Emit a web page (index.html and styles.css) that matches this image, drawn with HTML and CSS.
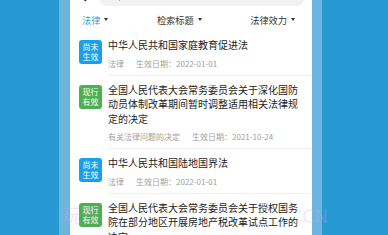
FILE: index.html
```html
<!DOCTYPE html>
<html lang="zh-CN">
<head>
<meta charset="utf-8">
<link rel="stylesheet" href="styles.css">
</head>
<body>
<div class="stage">
  <div class="stripe stripe-left"></div>
  <div class="screen">
    <div class="top">
      <svg class="back" width="8" height="12" viewBox="0 0 8 12"><path d="M6 0 L1 5 L6 10" fill="none" stroke="#333" stroke-width="1.6"/></svg>
      <div class="search">
        <svg class="mag" width="8" height="8" viewBox="0 0 8 8"><circle cx="3.5" cy="3.5" r="2.6" fill="none" stroke="#666" stroke-width="1"/><path d="M5.5 5.5 L7.5 7.5" stroke="#666" stroke-width="1"/></svg>
      </div>
    </div>
    <div class="filters">
      <div class="filter active">法律<span class="caret"></span></div>
      <div class="filter">检索标题<span class="caret"></span></div>
      <div class="filter">法律效力<span class="caret"></span></div>
    </div>
    <div class="list">
      <div class="item">
        <div class="badge pending">尚未<br>生效</div>
        <div class="content">
          <div class="title">中华人民共和国家庭教育促进法</div>
          <div class="meta"><span>法律</span><span>生效日期：2022-01-01</span></div>
        </div>
      </div>
      <div class="item">
        <div class="badge valid">现行<br>有效</div>
        <div class="content">
          <div class="title">全国人民代表大会常务委员会关于深化国防动员体制改革期间暂时调整适用相关法律规定的决定</div>
          <div class="meta"><span>有关法律问题的决定</span><span>生效日期：2021-10-24</span></div>
        </div>
      </div>
      <div class="item">
        <div class="badge pending">尚未<br>生效</div>
        <div class="content">
          <div class="title">中华人民共和国陆地国界法</div>
          <div class="meta"><span>法律</span><span>生效日期：2022-01-01</span></div>
        </div>
      </div>
      <div class="item">
        <div class="badge valid">现行<br>有效</div>
        <div class="content">
          <div class="title">全国人民代表大会常务委员会关于授权国务院在部分地区开展房地产税改革试点工作的决定</div>
          <div class="meta"><span>有关法律问题的决定</span><span>生效日期：2021-10-23</span></div>
        </div>
      </div>
    </div>
  </div>
  <div class="stripe stripe-right"></div>
</div>
<div class="watermark"><span>玩营</span><span>CN</span></div>
</body>
</html>
```

FILE: styles.css
```css
html, body {
  margin: 0;
  padding: 0;
}
body {
  width: 388px;
  height: 235px;
  overflow: hidden;
  background: #2698d2;
  font-family: "Noto Sans CJK SC", "Noto Sans", sans-serif;
  position: relative;
}
.stage {
  display: flex;
  height: 235px;
  margin-left: 59px;
}
.stripe {
  background: #6db5df;
}
.stripe-left {
  width: 11px;
}
.stripe-right {
  width: 10px;
}
.screen {
  width: 242px;
  background: #fff;
  overflow: hidden;
}
.top {
  height: 8px;
  overflow: hidden;
  display: flex;
  align-items: flex-end;
  padding: 0 8px 0 10px;
}
.back {
  flex: none;
  margin-bottom: 5px;
  margin-right: 12px;
}
.search {
  flex: 1;
  height: 22px;
  margin-bottom: 2px;
  background: #f1f1f2;
  border-radius: 7px;
  display: flex;
  align-items: flex-end;
  padding-left: 12px;
}
.mag {
  margin-bottom: 5px;
}
.filters {
  height: 23px;
  display: flex;
  align-items: center;
  justify-content: space-between;
  padding: 0 17px 0 12px;
  font-size: 9.2px;
  line-height: 12px;
  color: #333;
}
.filter {
  display: flex;
  align-items: center;
}
.filter.active {
  color: #3a9de2;
}
.caret {
  width: 0;
  height: 0;
  margin-left: 4px;
  border-left: 2.5px solid transparent;
  border-right: 2.5px solid transparent;
  border-top: 3.2px solid #333;
}
.item {
  display: flex;
  padding-left: 9px;
}
.badge {
  flex: none;
  width: 23px;
  height: 24px;
  margin-top: 9px;
  margin-right: 6px;
  border-radius: 3px;
  color: #fff;
  font-size: 8px;
  line-height: 10px;
  text-align: center;
  padding-top: 2px;
  box-sizing: border-box;
}
.badge.pending {
  background: #17a0ee;
}
.badge.valid {
  background: #4caf50;
}
.content {
  flex: 1;
  padding: 7px 9px 5px 0;
  border-bottom: 1px solid #efefef;
}
.title {
  font-size: 10px;
  line-height: 14.5px;
  color: #1c1c1c;
}
.meta {
  display: flex;
  gap: 12px;
  margin-top: 5px;
  font-size: 8px;
  line-height: 12px;
  color: #a0a0a0;
}
.watermark {
  position: absolute;
  left: 62px;
  top: 203px;
  width: 266px;
  display: flex;
  justify-content: space-between;
  font-size: 19px;
  line-height: 24px;
  color: rgba(214, 160, 236, 0.3);
  pointer-events: none;
}
```
